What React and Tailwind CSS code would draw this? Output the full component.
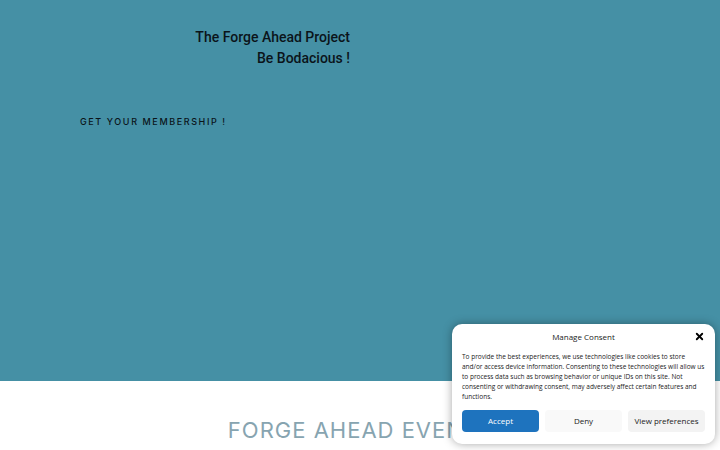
import { X } from 'lucide-react'

function ConsentBanner() {
  return (
    <div
      className="absolute left-[452px] top-[324px] w-[263px] rounded-[10px] bg-white px-[10px] pt-[8px] pb-[12px] shadow-[0_0_10px_rgba(0,0,0,0.35)]"
      style={{ fontFamily: '"Open Sans", sans-serif' }}
    >
      <div className="relative flex h-[10px] items-center justify-center">
        <span className="text-[8px] text-[#222]">Manage Consent</span>
        <X className="absolute right-0 top-[-1px] h-[11px] w-[11px] text-black" strokeWidth={4} />
      </div>
      <p className="mt-[10px] text-[6.5px] leading-[10px] text-[#222]">
        To provide the best experiences, we use technologies like cookies to store and/or access device
        information. Consenting to these technologies will allow us to process data such as browsing
        behavior or unique IDs on this site. Not consenting or withdrawing consent, may adversely affect
        certain features and functions.
      </p>
      <div className="mt-[8px] flex gap-[6px]">
        <button className="h-[22px] w-[77px] rounded-[4px] bg-[#1e73be] text-[8px] text-white">Accept</button>
        <button className="h-[22px] w-[77px] rounded-[4px] bg-[#f9f9f9] text-[8px] text-[#222]">Deny</button>
        <button className="h-[22px] w-[77px] rounded-[4px] bg-[#f3f3f3] text-[8px] text-[#222]">View preferences</button>
      </div>
    </div>
  )
}

export default function App() {
  return (
    <div className="relative h-[450px] w-[720px] overflow-hidden bg-white">
      {/* Hero */}
      <div className="h-[381px] bg-[#4590a5]">
        <div className="flex w-[350px] flex-col items-end pt-[27px] text-[14px] font-medium leading-[21px] text-[#0b141a]" style={{ fontFamily: 'Roboto, sans-serif' }}>
          <span>The Forge Ahead Project</span>
          <span>Be Bodacious !</span>
        </div>
        <div className="ml-[80px] mt-[46px] text-[9px] font-medium tracking-[1.6px] text-[#0b141a]" style={{ fontFamily: 'Inter, sans-serif' }}>
          GET YOUR MEMBERSHIP !
        </div>
      </div>

      {/* Events */}
      <div className="flex justify-center pt-[33px]">
        <h2 className="ml-[2px] text-[22px] font-normal tracking-[1px] text-[#87a4b0]" style={{ fontFamily: 'Inter, sans-serif' }}>
          FORGE AHEAD EVENTS
        </h2>
      </div>

      <ConsentBanner />
    </div>
  )
}
